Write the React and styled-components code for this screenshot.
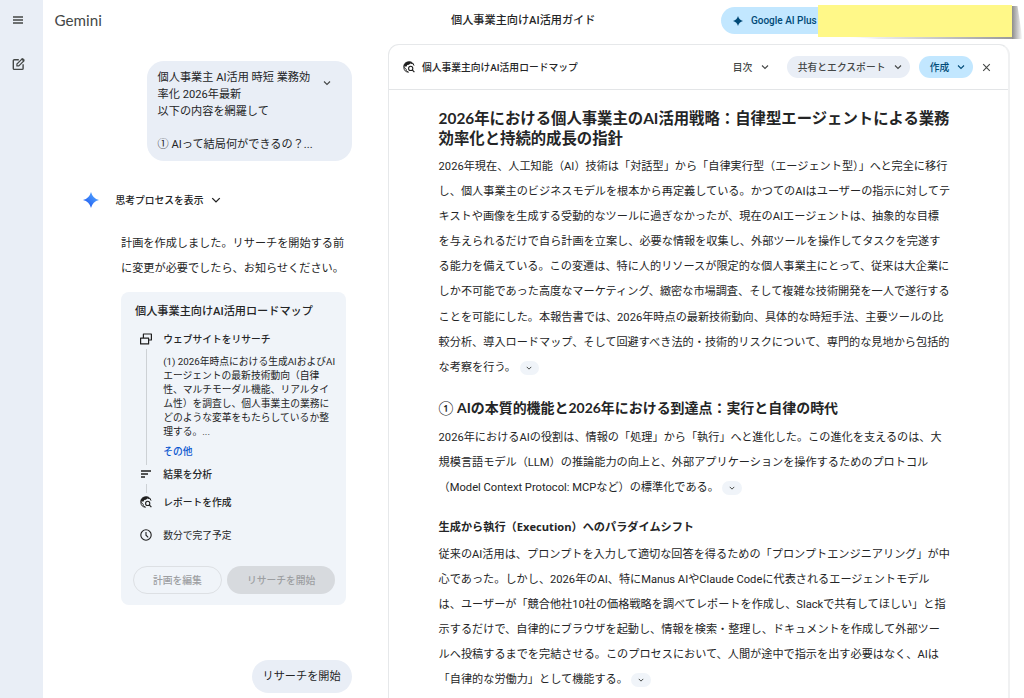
import React from 'react'
import styled, { createGlobalStyle } from 'styled-components'

const GlobalStyle = createGlobalStyle`
  *, *::before, *::after { box-sizing: border-box; }
  body {
    margin: 0;
    background: #fff;
    color: #242526;
    font-family: Roboto, 'Noto Sans CJK JP', sans-serif;
    font-size: 11.17px;
  }
  h1, h2, h3, p { margin: 0; }
  button { font: inherit; }
  svg { display: block; flex-shrink: 0; }
`

const Page = styled.div`
  display: flex;
  width: 1024px;
  height: 698px;
  overflow: hidden;
`

const Rail = styled.nav`
  width: 43px;
  flex-shrink: 0;
  background: #e9eef6;
  display: flex;
  flex-direction: column;
  align-items: center;
  gap: 30px;
  padding: 13px 7px 0 0;
`

const Main = styled.div`
  flex: 1;
  min-width: 0;
  display: flex;
  flex-direction: column;
`

const TopBar = styled.header`
  height: 44px;
  flex-shrink: 0;
  display: flex;
  align-items: flex-start;
  justify-content: space-between;
`

const Brand = styled.div`
  width: 397px;
  padding-left: 11.5px;
  font-family: Lato, sans-serif;
  font-size: 15.2px;
  line-height: 40px;
  color: #444746;
`

const ChatTitle = styled.h1`
  flex: 1;
  font-size: 11.17px;
  font-weight: 500;
  line-height: 41px;
  white-space: nowrap;
  padding-left: 11px;
`

const PlanBadge = styled.div`
  position: relative;
  width: 302.6px;
  height: 27px;
  margin-top: 7px;
  display: flex;
  align-items: center;
  gap: 7.5px;
  padding-left: 12px;
  color: #004a77;
  font-size: 10px;
  font-weight: 500;
  white-space: nowrap;
  &::before {
    content: '';
    position: absolute;
    inset: 0 190px 0 0;
    z-index: -1;
    border-radius: 14px;
    background: #c2e7ff;
  }
`

const StickyNote = styled.svg`
  position: absolute;
  left: 96.9px;
  top: -3px;
`

const Columns = styled.div`
  flex: 1;
  min-height: 0;
  display: flex;
`

const Chat = styled.section`
  width: 345px;
  flex-shrink: 0;
  padding: 17px 36.4px 0 38px;
  display: flex;
  flex-direction: column;
`

const Prompt = styled.div`
  align-self: flex-end;
  width: 205px;
  height: 100px;
  padding: 9px 21px 0 11px;
  border-radius: 17px;
  background: #e9eef6;
  display: flex;
  justify-content: space-between;
  line-height: 16.75px;
  white-space: pre;
  svg { margin-top: 9px; }
`

const Thinking = styled.div`
  display: flex;
  align-items: center;
  height: 20px;
  margin-top: 29px;
  font-size: 9.77px;
  font-weight: 500;
  white-space: nowrap;
  svg:first-child { margin: 0 17px 0 1.5px; }
  svg:last-child { margin-left: 8px; }
`

const Reply = styled.p`
  margin: 21px 0 0 40px;
  line-height: 25.1px;
  white-space: pre;
`

const PlanCard = styled.article`
  margin: 11px 0 0 40px;
  width: 225px;
  height: 313px;
  flex-shrink: 0;
  border-radius: 8px;
  background: #f0f4f9;
  padding: 11px 11px 0 12px;
`

const PlanTitle = styled.h2`
  padding-left: 2px;
  font-size: 11.17px;
  font-weight: 500;
  line-height: 18px;
`

const Step = styled.div`
  display: flex;
  height: ${props => props.$height}px;
  margin-top: ${props => props.$top || 0}px;
  padding-left: 7.4px;
  gap: 10.8px;
`

const StepMark = styled.div`
  width: 12px;
  display: flex;
  flex-direction: column;
  align-items: center;
  &::after {
    content: '';
    display: ${props => (props.$line ? 'block' : 'none')};
    flex: 1;
    width: 1px;
    margin: 4px 0 3px;
    background: #cdd1d5;
  }
`

const StepBody = styled.div`
  font-size: 9.77px;
  font-weight: ${props => (props.$plain ? 400 : 500)};
  line-height: 14px;
  white-space: nowrap;
`

const StepText = styled.p`
  margin-top: 8px;
  font-size: 9.77px;
  font-weight: 400;
  line-height: 13.95px;
  white-space: pre;
`

const More = styled.a`
  display: block;
  margin-top: 6.5px;
  color: #0b57d0;
`

const PlanActions = styled.div`
  display: flex;
  gap: 5.5px;
`

const PlanButton = styled.button`
  width: ${props => (props.$filled ? 108 : 89)}px;
  height: 28px;
  padding: 0;
  border: 1px solid ${props => (props.$filled ? 'transparent' : '#dde0e4')};
  border-radius: 14px;
  background: ${props => (props.$filled ? '#d7dade' : 'transparent')};
  color: #9d9fa2;
  font-size: 9.77px;
  font-weight: 500;
`

const StartBubble = styled.div`
  align-self: flex-end;
  margin-top: 55px;
  width: 100px;
  height: 33px;
  flex-shrink: 0;
  border-radius: 17px;
  background: #e9eef6;
  line-height: 33px;
  text-align: center;
`

const Panel = styled.section`
  width: 622px;
  border: 1px solid #e6e8ea;
  border-right: 2px solid #f0f1f2;
  border-bottom: 0;
  border-radius: 11px 11px 0 0;
`

const PanelBar = styled.div`
  height: 45px;
  border-bottom: 1px solid #e3e5e7;
  display: flex;
  align-items: center;
  padding: 0 17.2px 0 14px;
  font-size: 9.77px;
  font-weight: 500;
  white-space: nowrap;
`

const PanelTitle = styled.div`
  flex: 1;
  display: flex;
  align-items: center;
  gap: 7px;
`

const Pill = styled.button`
  height: 22px;
  width: ${props => props.$width}px;
  margin-left: ${props => props.$gap || 0}px;
  border: 0;
  border-radius: 11px;
  padding: 0 8px 0 11px;
  display: flex;
  align-items: center;
  justify-content: space-between;
  background: ${props => props.$bg || 'transparent'};
  color: ${props => props.$color || '#444746'};
`

const CloseButton = styled.button`
  margin-left: 9px;
  padding: 0;
  border: 0;
  background: none;
`

const Doc = styled.div`
  padding: 18px 0 0 49.6px;
`

const Title = styled.h1`
  font-family: Lato, 'Noto Sans CJK JP', sans-serif;
  font-size: 15.36px;
  font-weight: 700;
  line-height: 20px;
  white-space: pre;
`

const Heading = styled.h2`
  margin-top: 18.5px;
  font-family: Lato, 'Noto Sans CJK JP', sans-serif;
  font-size: 13.96px;
  font-weight: 700;
  line-height: 20px;
  white-space: nowrap;
`

const HeadingNumber = styled.span`
  font-weight: 400;
`

const SubHeading = styled.h3`
  margin-top: 17px;
  font-family: 'Open Sans', 'Noto Sans CJK JP', sans-serif;
  font-size: 11.17px;
  font-weight: 700;
  line-height: 20px;
`

const Paragraph = styled.p`
  margin-top: ${props => props.$top}px;
  line-height: 25.1px;
`

const Line = styled.span`
  display: block;
  white-space: pre;
`

const SourceChip = styled.span`
  display: inline-flex;
  align-items: center;
  justify-content: center;
  width: 19.5px;
  height: 14px;
  margin-left: 3.5px;
  border-radius: 7px;
  background: #f0f4f9;
  vertical-align: middle;
`

const Chevron = ({ size = 8, color = '#444746', weight = 1.1 }) => (
  <svg width={size} height={size} viewBox='0 0 8 8' fill='none'>
    <path d='M1 2.5 4 5.5 7 2.5' stroke={color} strokeWidth={weight} />
  </svg>
)

const MenuIcon = () => (
  <svg width='12' height='14' viewBox='0 0 12 14'>
    <path d='M1 4h10M1 7h10M1 10h10' stroke='#444746' strokeWidth='1.3' />
  </svg>
)

const ComposeIcon = () => (
  <svg width='14' height='14' viewBox='0 0 14 14' fill='none'>
    <path
      d='M7.800 2.700H3.300a1 1 0 0 0-1 1v7.700a1 1 0 0 0 1 1h7.800a1 1 0 0 0 1-1V7.200'
      stroke='#444746'
      strokeWidth='1.4'
    />
    <path
      d='M5.900 8.900V7l5-5 1.900 1.900-5 5Z'
      stroke='#444746'
      strokeWidth='1.2'
    />
    <path d='m10.600 2.200 1-1.100 2 2-1 1Z' fill='#444746' stroke='#444746' strokeWidth='.4' />
  </svg>
)

const Spark = ({ size, fill }) => (
  <svg width={size} height={size} viewBox='0 0 16 16'>
    <defs>
      <linearGradient id='spark' x1='0' y1='1' x2='1' y2='0'>
        <stop offset='.3' stopColor='#2b6bf3' />
        <stop offset='.8' stopColor='#4fa0ff' />
      </linearGradient>
    </defs>
    <path
      d='M8 0Q9.6 6.4 16 8 9.6 9.6 8 16 6.4 9.6 0 8 6.4 6.4 8 0Z'
      fill={fill || 'url(#spark)'}
    />
  </svg>
)

const ResearchIcon = () => (
  <svg width='12' height='12' viewBox='0 0 12 12' fill='none'>
    <path
      d='M11 4.6A5.2 5.2 0 1 0 5.8 11.2'
      stroke='#1f1f1f'
      strokeWidth='1'
    />
    <path
      d='M.8 5.5C1 2.5 3.2.7 6 .7c2 0 3.7 1 4.6 2.6L8.8 3 7.3 2.6 6 3.8 4.2 4 3.6 5.4 2 5.6Z'
      fill='#1f1f1f'
    />
    <path d='M1 6.2 3.2 8v1.3L5 11' stroke='#1f1f1f' strokeWidth='.8' />
    <circle cx='7.7' cy='7.4' r='2.1' stroke='#1f1f1f' strokeWidth='1.1' />
    <path d='m9.2 8.9 2.2 2.3' stroke='#1f1f1f' strokeWidth='1.2' />
  </svg>
)

const WebsitesIcon = () => (
  <svg width='12' height='12' viewBox='0 0 12 12' fill='none'>
    <path
      d='M3.4 4.9V1h8v6H8.6M.6 5.1h8v5.8h-8Z'
      stroke='#1f1f1f'
      strokeWidth='1.2'
      strokeLinejoin='round'
    />
  </svg>
)

const AnalyzeIcon = () => (
  <svg width='12' height='12' viewBox='0 0 12 12'>
    <path d='M1 3h10M1 6h7M1 9h4' stroke='#1f1f1f' strokeWidth='1.3' />
  </svg>
)

const ClockIcon = () => (
  <svg width='12' height='12' viewBox='0 0 12 12' fill='none'>
    <circle cx='6' cy='6' r='5.2' stroke='#1f1f1f' strokeWidth='1.1' />
    <path d='M6 3v3.2l2.2 2.2' stroke='#1f1f1f' strokeWidth='1.1' />
  </svg>
)

const CloseIcon = () => (
  <svg width='9' height='9' viewBox='0 0 9 9'>
    <path d='m1.2 1.2 6.6 6.6m0-6.6L1.2 7.8' stroke='#444746' strokeWidth='1.1' />
  </svg>
)

// Paper note with a lifted corner: the shadow widens towards the bottom right
const Note = () => (
  <StickyNote width='206' height='38' viewBox='0 0 206 38'>
    <defs>
      <linearGradient id='side' x1='0' y1='0' x2='1' y2='0'>
        <stop offset='0' stopColor='#8c8c8c' />
        <stop offset='1' stopColor='#8c8c8c' stopOpacity='0' />
      </linearGradient>
      <linearGradient id='under' x1='0' y1='0' x2='1' y2='0'>
        <stop offset='0' stopColor='#888' stopOpacity='0' />
        <stop offset='1' stopColor='#888' stopOpacity='.85' />
      </linearGradient>
    </defs>
    <path d='M194 2h5.500l5 33H194Z' fill='url(#side)' />
    <path d='M30 33h164v2H60Z' fill='url(#under)' />
    <path d='M0 1h194v32H0Z' fill='#fff888' />
  </StickyNote>
)

const INTRO = [
  '2026年現在、人工知能（AI）技術は「対話型」から「自律実行型（エージェント型）」へと完全に移行',
  'し、個人事業主のビジネスモデルを根本から再定義している。かつてのAIはユーザーの指示に対してテ',
  'キストや画像を生成する受動的なツールに過ぎなかったが、現在のAIエージェントは、抽象的な目標',
  'を与えられるだけで自ら計画を立案し、必要な情報を収集し、外部ツールを操作してタスクを完遂す',
  'る能力を備えている。この変遷は、特に人的リソースが限定的な個人事業主にとって、従来は大企業に',
  'しか不可能であった高度なマーケティング、緻密な市場調査、そして複雑な技術開発を一人で遂行する',
  'ことを可能にした。本報告書では、2026年時点の最新技術動向、具体的な時短手法、主要ツールの比',
  '較分析、導入ロードマップ、そして回避すべき法的・技術的リスクについて、専門的な見地から包括的',
  'な考察を行う。'
]

const ROLE = [
  '2026年におけるAIの役割は、情報の「処理」から「執行」へと進化した。この進化を支えるのは、大',
  '規模言語モデル（LLM）の推論能力の向上と、外部アプリケーションを操作するためのプロトコル',
  '（Model Context Protocol: MCPなど）の標準化である。'
]

const SHIFT = [
  '従来のAI活用は、プロンプトを入力して適切な回答を得るための「プロンプトエンジニアリング」が中',
  '心であった。しかし、2026年のAI、特にManus AIやClaude Codeに代表されるエージェントモデル',
  'は、ユーザーが「競合他社10社の価格戦略を調べてレポートを作成し、Slackで共有してほしい」と指',
  '示するだけで、自律的にブラウザを起動し、情報を検索・整理し、ドキュメントを作成して外部ツー',
  'ルへ投稿するまでを完結させる。このプロセスにおいて、人間が途中で指示を出す必要はなく、AIは',
  '「自律的な労働力」として機能する。'
]

const Sourced = ({ lines, top }) => (
  <Paragraph $top={top}>
    {lines.map((line, index) => (
      <Line key={line}>
        {line}
        {index === lines.length - 1 && (
          <SourceChip>
            <Chevron size={6} weight={1.3} />
          </SourceChip>
        )}
      </Line>
    ))}
  </Paragraph>
)

const ResearchPlan = () => (
  <PlanCard>
    <PlanTitle>個人事業主向けAI活用ロードマップ</PlanTitle>
    <Step $height={135} $top={12}>
      <StepMark $line>
        <WebsitesIcon />
      </StepMark>
      <StepBody>
        ウェブサイトをリサーチ
        <StepText>
          {
            '(1) 2026年時点における生成AIおよびAI\nエージェントの最新技術動向（自律\n性、マルチモーダル機能、リアルタイ\nム性）を調査し、個人事業主の業務に\nどのような変革をもたらしているか整\n理する。...'
          }
        </StepText>
        <More>その他</More>
      </StepBody>
    </Step>
    <Step $height={28}>
      <StepMark $line>
        <AnalyzeIcon />
      </StepMark>
      <StepBody>結果を分析</StepBody>
    </Step>
    <Step $height={33}>
      <StepMark>
        <ResearchIcon />
      </StepMark>
      <StepBody>レポートを作成</StepBody>
    </Step>
    <Step $height={37}>
      <StepMark>
        <ClockIcon />
      </StepMark>
      <StepBody $plain>数分で完了予定</StepBody>
    </Step>
    <PlanActions>
      <PlanButton disabled>計画を編集</PlanButton>
      <PlanButton disabled $filled>
        リサーチを開始
      </PlanButton>
    </PlanActions>
  </PlanCard>
)

const App = () => (
  <>
    <GlobalStyle />
    <Page>
      <Rail>
        <MenuIcon />
        <ComposeIcon />
      </Rail>
      <Main>
        <TopBar>
          <Brand>Gemini</Brand>
          <ChatTitle>個人事業主向けAI活用ガイド</ChatTitle>
          <PlanBadge>
            <Spark size={10} fill='#004a77' />
            Google AI Plus
            <Note />
          </PlanBadge>
        </TopBar>
        <Columns>
          <Chat>
            <Prompt>
              {
                '個人事業主 AI活用 時短 業務効\n率化 2026年最新\n以下の内容を網羅して\n\n① AIって結局何ができるの？...'
              }
              <Chevron />
            </Prompt>
            <Thinking>
              <Spark size={16} />
              思考プロセスを表示
              <Chevron size={10} color='#1f1f1f' />
            </Thinking>
            <Reply>
              {
                '計画を作成しました。リサーチを開始する前\nに変更が必要でしたら、お知らせください。'
              }
            </Reply>
            <ResearchPlan />
            <StartBubble>リサーチを開始</StartBubble>
          </Chat>
          <Panel>
            <PanelBar>
              <PanelTitle>
                <ResearchIcon />
                個人事業主向けAI活用ロードマップ
              </PanelTitle>
              <Pill $width={55}>
                目次
                <Chevron />
              </Pill>
              <Pill $width={123} $gap={10} $bg='#e9eef6'>
                共有とエクスポート
                <Chevron />
              </Pill>
              <Pill $width={54} $gap={9} $bg='#c2e7ff' $color='#004a77'>
                作成
                <Chevron color='#004a77' />
              </Pill>
              <CloseButton aria-label='閉じる'>
                <CloseIcon />
              </CloseButton>
            </PanelBar>
            <Doc>
              <Title>
                {
                  '2026年における個人事業主のAI活用戦略：自律型エージェントによる業務\n効率化と持続的成長の指針'
                }
              </Title>
              <Sourced lines={INTRO} top={6} />
              <Heading>
                <HeadingNumber>①</HeadingNumber>{' '}
                AIの本質的機能と2026年における到達点：実行と自律の時代
              </Heading>
              <Sourced lines={ROLE} top={6.5} />
              <SubHeading>生成から執行（Execution）へのパラダイムシフト</SubHeading>
              <Sourced lines={SHIFT} top={4.5} />
            </Doc>
          </Panel>
        </Columns>
      </Main>
    </Page>
  </>
)

export default App
